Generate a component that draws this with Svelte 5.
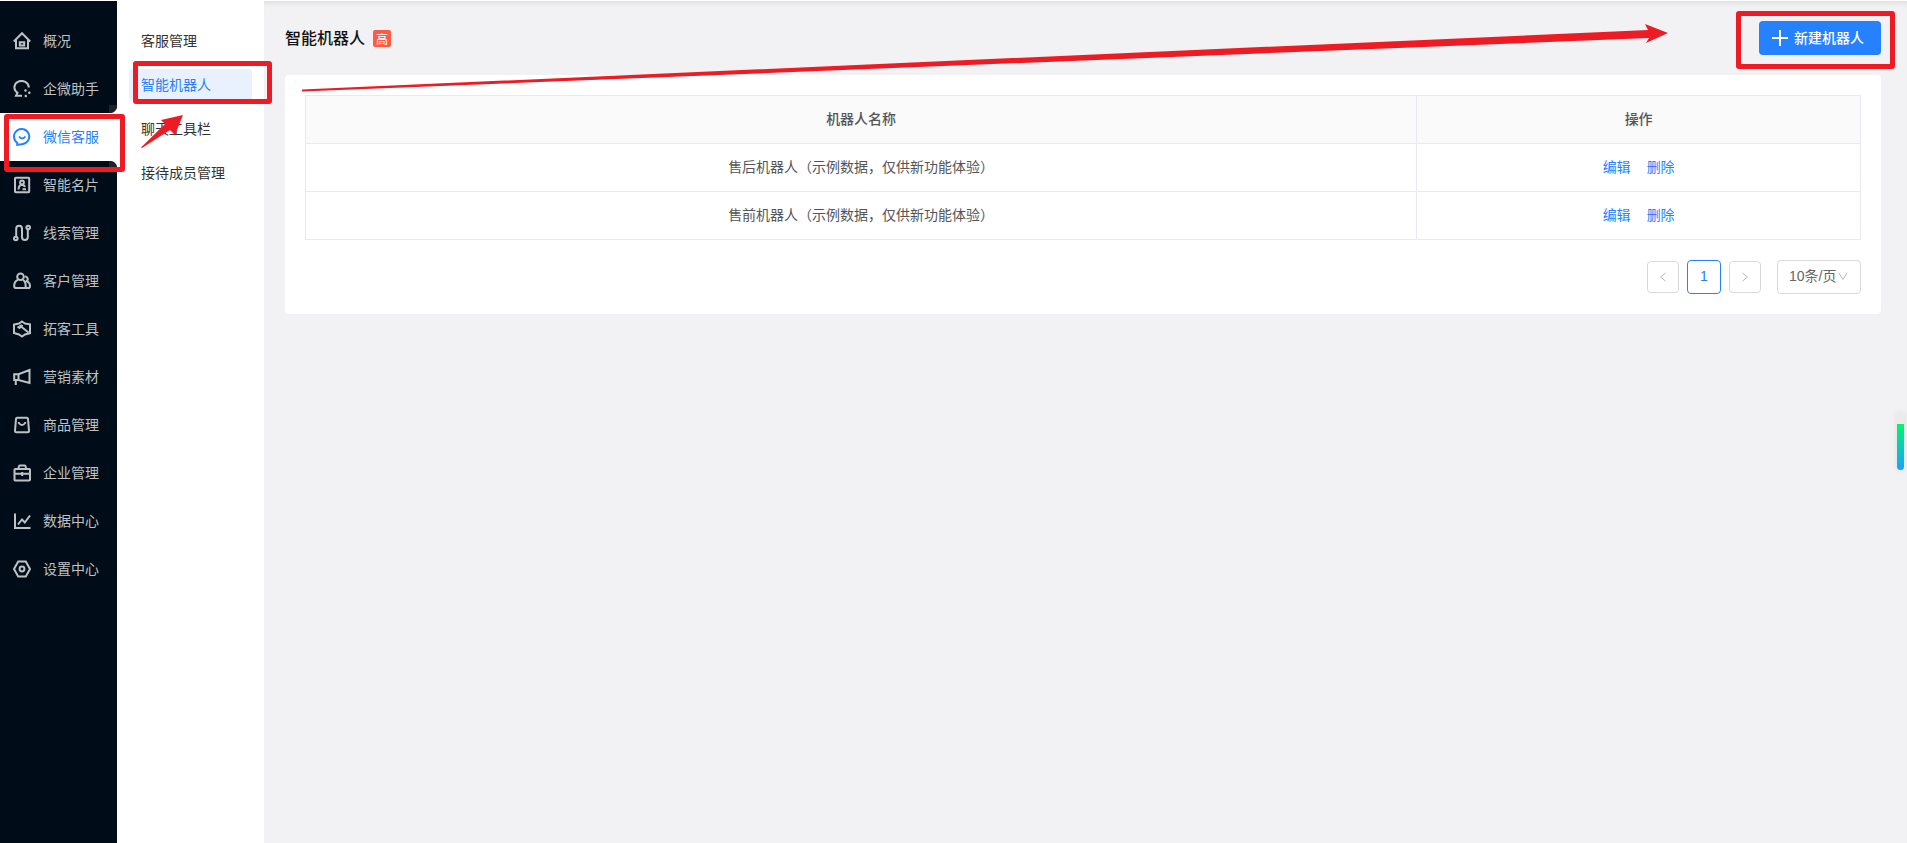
<script>
	const menu = [
		{ label: "概况", icon: "home" },
		{ label: "企微助手", icon: "chat" },
		{ label: "微信客服", icon: "service", active: true },
		{ label: "智能名片", icon: "card" },
		{ label: "线索管理", icon: "clue" },
		{ label: "客户管理", icon: "users" },
		{ label: "拓客工具", icon: "tool" },
		{ label: "营销素材", icon: "horn" },
		{ label: "商品管理", icon: "bag" },
		{ label: "企业管理", icon: "case" },
		{ label: "数据中心", icon: "chart" },
		{ label: "设置中心", icon: "setting" }
	]

	const icons = {
		home: '<path d="M.8 9.500 9 1.200l8.200 8.300M3 8v8.200h12V8"/><path d="M6.800 10.300h4.400v3.200H6.800z"/>',
		chat: '<path d="M15.800 7.500A7.200 6.500 0 1 0 4.500 12.800L3 15.800h6"/><path d="M12.500 9.300v2.400M11.300 10.500h2.400M16.300 11.500v2.400M15.100 12.700h2.400M12.800 14.800v2.400M11.600 16h2.400" stroke-width="1.500"/>',
		service: '<path d="M4.200 16.800V14.800A7.600 7.600 0 1 1 9 16.200z"/><path d="M6 8.500q3.200 4.200 6.400 0"/>',
		card: '<rect x="2" y="1.800" width="14.200" height="14.400" rx=".8"/><circle cx="9" cy="6.500" r="1.900"/><path d="M5.500 13.500q.3-4.600 3.500-4.800 2.500.2 2.800 2.500M9.500 13.200h3.500"/>',
		clue: '<circle cx="2.800" cy="14.500" r="1.800"/><circle cx="15.200" cy="3.500" r="1.800"/><path d="M3.200 12.500V5a2.900 3.200 0 0 1 5.800 0v8a2.900 3 0 0 0 5.800 0V5.500"/>',
		users: '<circle cx="7.500" cy="4.800" r="3.300"/><path d="M5 7.800C2 9 1.200 12 1.200 14.300q0 1.800 1.800 1.800h8.200q1.500 0 1.500-1.800C12.700 12 12 9 10 7.800"/><path d="M12 4.500a2.600 2.600 0 0 1 1.500 4.800c2.300.7 3.500 2.700 3.500 5q0 1.800-1.800 1.800H12"/>',
		tool: '<path d="M9 1.500l3 2 5 .8v9L12 14.500l-3 2-3-2-5-1.500V4.500L6 3.500z"/><path d="M9.500 5 6.500 8 4.500 6.500M6.500 5.200 15.500 12.500"/>',
		horn: '<path d="M1.200 6.200h4.300L16.500 2v13L5.500 12H1.200zM5.500 6v6M2.800 12v5"/>',
		bag: '<path d="M4.200 1.800h9.600q1 0 1.200 1l1 11.900q0 1.500-1.500 1.500h-11Q2 16.200 2 14.700l1-11.900q.2-1 1.200-1z"/><path d="M5.800 6v1q3.200 4 6.400 0V6"/>',
		case: '<rect x="1.500" y="5" width="15.500" height="11.500" rx=".8"/><path d="M5.500 5Q5.500 1.500 7 1.500h4.500Q13 1.500 13 5M1.500 9.800H17M9.200 8v4"/>',
		chart: '<path d="M2 1.500V16h15.500M5 12.500l4-5 2.800 3L17 3.500"/>',
		setting: '<path d="M5.200 1.500h7.600L17 9l-4.200 7.500H5.200L1 9z"/><circle cx="9" cy="9" r="2.400"/>'
	}

	const submenu = ["客服管理", "智能机器人", "聊天工具栏", "接待成员管理"]
	let current = $state("智能机器人")

	const robots = [
		"售后机器人（示例数据，仅供新功能体验）",
		"售前机器人（示例数据，仅供新功能体验）"
	]
</script>

<div class="layout">
	<nav class="sidebar">
		{#each menu as item}
			<a href="#top" class="menu-item" class:active={item.active}>
				<svg viewBox="0 0 18 18">{@html icons[item.icon]}</svg>
				<span>{item.label}</span>
			</a>
		{/each}
	</nav>

	<nav class="submenu">
		{#each submenu as name}
			<a href="#top" class:active={name === current} onclick={() => (current = name)}>{name}</a>
		{/each}
	</nav>

	<main>
		<header>
			<h1>智能机器人</h1>
			<span class="tag">高</span>
			<button class="create">
				<svg viewBox="0 0 16 16"><path d="M8 0v16M0 8h16" /></svg>
				<span>新建机器人</span>
			</button>
		</header>

		<section class="card">
			<table>
				<thead>
					<tr><th class="name">机器人名称</th><th>操作</th></tr>
				</thead>
				<tbody>
					{#each robots as robot}
						<tr>
							<td>{robot}</td>
							<td>
								<div class="actions">
									<a href="#top">编辑</a>
									<a href="#top">删除</a>
								</div>
							</td>
						</tr>
					{/each}
				</tbody>
			</table>

			<div class="pagination">
				<button class="page" aria-label="上一页" disabled>
					<svg viewBox="0 0 12 12"><path d="M9 1 3 6l6 5" /></svg>
				</button>
				<button class="page current">1</button>
				<button class="page" aria-label="下一页" disabled>
					<svg viewBox="0 0 12 12"><path d="M3 1l6 5-6 5" /></svg>
				</button>
				<div class="size">
					<select aria-label="每页条数">
						<option>10条/页</option>
					</select>
					<svg viewBox="0 0 12 12"><path d="M1 1l5 8 5-8" /></svg>
				</div>
			</div>
		</section>
	</main>

	<div class="mark mark-menu"></div>
	<div class="mark mark-submenu"></div>
	<div class="mark mark-create"></div>
	<svg class="arrow-short" viewBox="0 0 44 34"><path d="M0 32.500 24 9 20 5 42 0 34 20 29 15 1 33z" /></svg>
	<svg class="arrow-long" viewBox="0 0 1366 70" preserveAspectRatio="none">
		<path d="M0 65.500 1346 6 1343 0 1366 9 1344 19 1347 14 0 67.500z" />
	</svg>
	<div class="meter"></div>
</div>

<style>
	:global(body) {
		background: #f2f2f4;
	}

	.layout {
		position: relative;
		display: flex;
		min-height: 100vh;
		box-sizing: border-box;
		border-top: 1px solid #fff;
		font-family: "Noto Sans CJK SC", sans-serif;
		font-size: 14px;
		line-height: 22px;
		color: #333;
	}

	a {
		color: inherit;
		text-decoration: none;
	}

	svg {
		fill: none;
		stroke: currentColor;
	}

	.sidebar {
		width: 117px;
		padding-top: 16px;
		background: #000c17;
		flex-shrink: 0;
	}

	.menu-item {
		display: flex;
		align-items: center;
		gap: 12px;
		height: 48px;
		padding-left: 13px;
		color: #bfc2c5;
	}

	.menu-item svg {
		width: 18px;
		height: 18px;
		stroke-width: 2;
	}

	.menu-item span,
	.create span {
		padding-bottom: 2px;
	}

	.menu-item.active {
		position: relative;
		background: #fff;
		color: #2681ff;
	}

	.menu-item.active::before,
	.menu-item.active::after {
		content: "";
		position: absolute;
		right: 0;
		width: 8px;
		height: 8px;
	}

	.menu-item.active::before {
		bottom: 100%;
		background: radial-gradient(circle at 0 0, #1f2329 8px, #fff 9px);
	}

	.menu-item.active::after {
		top: 100%;
		background: radial-gradient(circle at 0 100%, #1f2329 8px, #fff 9px);
	}

	.submenu {
		display: flex;
		flex-direction: column;
		gap: 12px;
		width: 147px;
		box-sizing: border-box;
		padding: 24px 12px;
		background: #fff;
		flex-shrink: 0;
	}

	.submenu a {
		padding: 4px 12px 6px;
		border-radius: 4px;
		white-space: nowrap;
	}

	.submenu a.active {
		background: #e9f1ff;
		color: #2681ff;
	}

	main {
		flex: 1;
		padding: 20px 26px 20px 21px;
		box-shadow: inset 0 6px 6px -5px #d5d6d8;
	}

	header {
		display: flex;
		align-items: center;
		margin-bottom: 20px;
	}

	h1 {
		margin: 0 8px 0 0;
		padding-bottom: 2px;
		font-size: 16px;
		font-weight: 500;
		color: #111;
	}

	.tag {
		padding: 0 3px;
		border-radius: 2px;
		background: #ff5a43;
		font-size: 12px;
		line-height: 17px;
		color: #fff;
	}

	.create {
		display: flex;
		align-items: center;
		gap: 6px;
		height: 34px;
		margin-left: auto;
		padding: 0 17px 0 13px;
		border: none;
		border-radius: 4px;
		background: #2681ff;
		font: inherit;
		font-weight: 500;
		color: #fff;
		cursor: pointer;
	}

	.create svg {
		width: 16px;
		height: 16px;
		stroke-width: 2;
	}

	.card {
		padding: 20px;
		border-radius: 4px;
		background: #fff;
	}

	table {
		width: 100%;
		border-collapse: collapse;
		table-layout: fixed;
		color: #555;
	}

	th,
	td {
		height: 44px;
		padding: 0 0 3px;
		border: 1px solid #e8eaf2;
		text-align: center;
	}

	th {
		background: #fafafa;
		font-weight: 500;
	}

	th.name {
		width: 71.4%;
	}

	.actions {
		display: flex;
		justify-content: center;
		gap: 16px;
		color: #2681ff;
	}

	.pagination {
		display: flex;
		justify-content: flex-end;
		align-items: center;
		gap: 8px;
		margin-top: 20px;
	}

	.page {
		display: flex;
		align-items: center;
		justify-content: center;
		width: 32px;
		height: 32px;
		padding: 0;
		border: 1px solid #d9d9d9;
		border-radius: 4px;
		background: #fff;
		font-family: "Liberation Sans", "Noto Sans CJK SC", sans-serif;
		font-size: 14px;
		color: #aaa;
	}

	.page.current {
		width: 34px;
		height: 34px;
		padding-bottom: 2px;
		border-color: #2681ff;
		color: #2681ff;
	}

	.page svg,
	.size svg {
		width: 10px;
		height: 10px;
	}

	.size {
		position: relative;
		margin-left: 8px;
	}

	.size select {
		appearance: none;
		display: block;
		width: 84px;
		height: 34px;
		padding: 0 0 2px 11px;
		border: 1px solid #d9d9d9;
		border-radius: 4px;
		background: #fff;
		font-family: "Liberation Sans", "Noto Sans CJK SC", sans-serif;
		font-size: 14px;
		color: #666;
	}

	.size svg {
		position: absolute;
		right: 13px;
		top: 12px;
		color: #aaa;
		pointer-events: none;
	}

	/* red guide marks over the page */
	.mark {
		position: absolute;
		box-sizing: border-box;
		border: 5px solid #ed1c24;
		border-radius: 3px;
		pointer-events: none;
	}

	.mark-menu {
		left: 4px;
		top: 113px;
		width: 121px;
		height: 58px;
	}

	.mark-submenu {
		left: 133px;
		top: 60px;
		width: 139px;
		height: 43px;
	}

	.mark-create {
		right: 12px;
		top: 10px;
		width: 159px;
		height: 58px;
	}

	.arrow-short,
	.arrow-long {
		position: absolute;
		fill: #ed1c24;
		stroke: none;
		pointer-events: none;
	}

	.arrow-short {
		left: 141px;
		top: 114px;
		width: 44px;
		height: 34px;
	}

	.arrow-long {
		left: 302px;
		top: 23px;
		width: calc(100% - 541px);
		height: 70px;
	}

	.meter {
		position: absolute;
		right: 3px;
		top: 411px;
		width: 7px;
		height: 58px;
		border-radius: 4px;
		background: linear-gradient(#ebebeb 12px, #00f56f 12px, #1aa0ff);
		box-shadow: 0 0 6px #ddd;
	}
</style>
